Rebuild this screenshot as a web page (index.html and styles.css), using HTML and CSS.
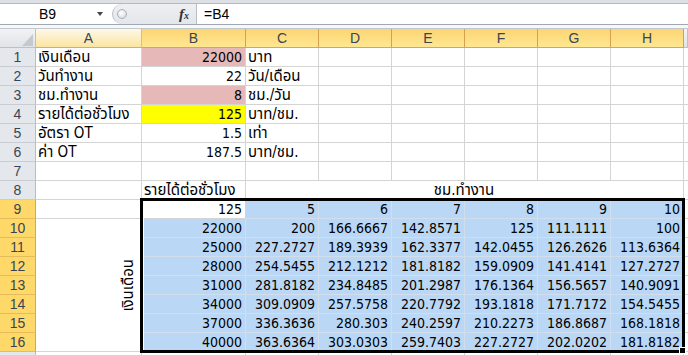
FILE: index.html
```html
<!DOCTYPE html>
<html lang="th">
<head>
    <meta charset="UTF-8">
    <title>รายได้ต่อชั่วโมง</title>
    <link rel="stylesheet" href="styles.css">
</head>
<body>
    <div class="ribbon-edge"></div>

    <!-- แถบสูตร -->
    <div class="formula-bar">
        <div class="name-box">
            <span class="name">B9</span>
            <span class="drop"></span>
        </div>
        <div class="fx-box">
            <span class="knob"></span>
            <span class="fx"><i>f</i><small>x</small></span>
        </div>
        <div class="formula">=B4</div>
    </div>
    <div class="gap"></div>

    <!-- ตาราง -->
    <div class="sheet">
        <div class="h corner"><span class="tri"></span></div>
        <div class="h col-a">A</div>
        <div class="h sel">B</div>
        <div class="h sel">C</div>
        <div class="h sel">D</div>
        <div class="h sel">E</div>
        <div class="h sel">F</div>
        <div class="h sel">G</div>
        <div class="h sel">H</div>
        <div class="h"></div>

        <div class="h rh">1</div>
        <div class="c t">เงินเดือน</div>
        <div class="c n pink">22000</div>
        <div class="c t">บาท</div>
        <div class="c"></div><div class="c"></div><div class="c"></div><div class="c"></div><div class="c"></div><div class="c"></div>

        <div class="h rh">2</div>
        <div class="c t">วันทำงาน</div>
        <div class="c n">22</div>
        <div class="c t">วัน/เดือน</div>
        <div class="c"></div><div class="c"></div><div class="c"></div><div class="c"></div><div class="c"></div><div class="c"></div>

        <div class="h rh">3</div>
        <div class="c t">ชม.ทำงาน</div>
        <div class="c n pink">8</div>
        <div class="c t">ชม./วัน</div>
        <div class="c"></div><div class="c"></div><div class="c"></div><div class="c"></div><div class="c"></div><div class="c"></div>

        <div class="h rh">4</div>
        <div class="c t">รายได้ต่อชั่วโมง</div>
        <div class="c n yellow">125</div>
        <div class="c t">บาท/ชม.</div>
        <div class="c"></div><div class="c"></div><div class="c"></div><div class="c"></div><div class="c"></div><div class="c"></div>

        <div class="h rh">5</div>
        <div class="c t">อัตรา OT</div>
        <div class="c n">1.5</div>
        <div class="c t">เท่า</div>
        <div class="c"></div><div class="c"></div><div class="c"></div><div class="c"></div><div class="c"></div><div class="c"></div>

        <div class="h rh">6</div>
        <div class="c t">ค่า OT</div>
        <div class="c n">187.5</div>
        <div class="c t">บาท/ชม.</div>
        <div class="c"></div><div class="c"></div><div class="c"></div><div class="c"></div><div class="c"></div><div class="c"></div>

        <div class="h rh">7</div>
        <div class="c"></div><div class="c"></div><div class="c"></div><div class="c"></div><div class="c"></div><div class="c"></div><div class="c"></div><div class="c"></div><div class="c"></div>

        <div class="h rh">8</div>
        <div class="c"></div>
        <div class="c t">รายได้ต่อชั่วโมง</div>
        <div class="c t merge-hours">ชม.ทำงาน</div>
        <div class="c"></div>

        <div class="h rh sel">9</div>
        <div class="c"></div>
        <div class="c n">125</div>
        <div class="c n b">5</div>
        <div class="c n b">6</div>
        <div class="c n b">7</div>
        <div class="c n b">8</div>
        <div class="c n b">9</div>
        <div class="c n b">10</div>
        <div class="c"></div>

        <div class="h rh sel">10</div>
        <div class="c t merge-salary"><span class="vertical">เงินเดือน</span></div>
        <div class="c n b">22000</div>
        <div class="c n b">200</div>
        <div class="c n b">166.6667</div>
        <div class="c n b">142.8571</div>
        <div class="c n b">125</div>
        <div class="c n b">111.1111</div>
        <div class="c n b">100</div>
        <div class="c"></div>

        <div class="h rh sel">11</div>
        <div class="c n b">25000</div>
        <div class="c n b">227.2727</div>
        <div class="c n b">189.3939</div>
        <div class="c n b">162.3377</div>
        <div class="c n b">142.0455</div>
        <div class="c n b">126.2626</div>
        <div class="c n b">113.6364</div>
        <div class="c"></div>

        <div class="h rh sel">12</div>
        <div class="c n b">28000</div>
        <div class="c n b">254.5455</div>
        <div class="c n b">212.1212</div>
        <div class="c n b">181.8182</div>
        <div class="c n b">159.0909</div>
        <div class="c n b">141.4141</div>
        <div class="c n b">127.2727</div>
        <div class="c"></div>

        <div class="h rh sel">13</div>
        <div class="c n b">31000</div>
        <div class="c n b">281.8182</div>
        <div class="c n b">234.8485</div>
        <div class="c n b">201.2987</div>
        <div class="c n b">176.1364</div>
        <div class="c n b">156.5657</div>
        <div class="c n b">140.9091</div>
        <div class="c"></div>

        <div class="h rh sel">14</div>
        <div class="c n b">34000</div>
        <div class="c n b">309.0909</div>
        <div class="c n b">257.5758</div>
        <div class="c n b">220.7792</div>
        <div class="c n b">193.1818</div>
        <div class="c n b">171.7172</div>
        <div class="c n b">154.5455</div>
        <div class="c"></div>

        <div class="h rh sel">15</div>
        <div class="c n b">37000</div>
        <div class="c n b">336.3636</div>
        <div class="c n b">280.303</div>
        <div class="c n b">240.2597</div>
        <div class="c n b">210.2273</div>
        <div class="c n b">186.8687</div>
        <div class="c n b">168.1818</div>
        <div class="c"></div>

        <div class="h rh sel">16</div>
        <div class="c n b">40000</div>
        <div class="c n b">363.6364</div>
        <div class="c n b">303.0303</div>
        <div class="c n b">259.7403</div>
        <div class="c n b">227.2727</div>
        <div class="c n b">202.0202</div>
        <div class="c n b">181.8182</div>
        <div class="c"></div>

        <div class="h rh"></div>
        <div class="c"></div><div class="c"></div><div class="c"></div><div class="c"></div><div class="c"></div><div class="c"></div><div class="c"></div><div class="c"></div><div class="c"></div>

        <!-- กรอบช่วงที่เลือก B9:H16 -->
        <div class="selection"><span class="handle"></span></div>
    </div>
</body>
</html>
```

FILE: styles.css
```css
body {
    margin: 0;
    background: #fff;
    overflow: hidden;
    font-family: "DejaVu Sans Condensed", "Liberation Sans", "Noto Sans Thai", sans-serif;
    color: #000;
}

.ribbon-edge {
    height: 3px;
    background: #dde1e6;
    border-bottom: 1px solid #b3b9c1;
}

/* แถบสูตร */
.formula-bar {
    display: flex;
    height: 20px;
    border-bottom: 1px solid #a0a8b1;
    font-family: "Liberation Sans", sans-serif;
    font-size: 14px;
}
.name-box {
    width: 112px;
    display: flex;
    align-items: center;
}
.name {
    width: 95px;
    text-align: center;
}
.drop {
    width: 0;
    height: 0;
    border-left: 3px solid transparent;
    border-right: 3px solid transparent;
    border-top: 4px solid #444;
    margin-left: 2px;
}
.fx-box {
    width: 83px;
    display: flex;
    align-items: center;
    background: linear-gradient(#eef0f2, #e3e6ea);
    border-left: 1px solid #b7bdc5;
    border-right: 1px solid #b7bdc5;
    border-radius: 11px 0 0 11px;
}
.knob {
    width: 8px;
    height: 8px;
    margin-left: 4px;
    border: 1px solid #a9b0b8;
    border-radius: 50%;
    background: radial-gradient(circle at 40% 40%, #ffffff, #cdd2d8);
}
.fx {
    margin-left: auto;
    margin-right: 7px;
    font-family: "Liberation Serif", serif;
    font-weight: bold;
    font-size: 15px;
    color: #333;
}
.fx small {
    font-size: 10px;
    font-style: italic;
}
.formula {
    flex: 1;
    padding-left: 7px;
    line-height: 20px;
}
.gap {
    height: 3px;
    background: #f7f8f9;
    border-bottom: 1px solid #c3c8ce;
}

/* ตาราง */
.sheet {
    position: relative;
    display: grid;
    grid-template-columns: 36px 106px 104px repeat(6, 73px) 4px;
    grid-auto-rows: 19px;
}
.c {
    box-sizing: border-box;
    border-right: 1px solid #d4d4d4;
    border-bottom: 1px solid #d4d4d4;
    padding: 0 3px 0 2px;
    font-size: 14px;
    line-height: 18px;
    white-space: nowrap;
    overflow: hidden;
}
.t {
    font-size: 15px;
}
.n {
    text-align: right;
}
.pink {
    background: #e6b8b7;
}
.yellow {
    background: #ffff00;
}
.b {
    background: #bad7f6;
    border-color: #d2deeb;
}

.h {
    box-sizing: border-box;
    background: linear-gradient(#f1f3f5, #e1e4e8);
    border-right: 1px solid #bcc1c8;
    border-bottom: 1px solid #bcc1c8;
    font-family: "Liberation Sans", sans-serif;
    font-size: 14px;
    line-height: 18px;
    text-align: center;
    color: #3a4553;
}
.h.col-a {
    background: linear-gradient(#fdf8e9, #fbe5a0);
    border-bottom-color: #e3ac4e;
}
.h.sel {
    background: linear-gradient(#fbd574, #ffe790);
    border-right-color: #d4a24e;
    border-bottom-color: #e3a43e;
}
.h.rh {
    background: #e4e7eb;
    border-bottom-color: #c9cdd3;
    border-right-color: #b8bdc4;
}
.h.rh.sel {
    background: #ffd86a;
    border-bottom-color: #e6bb5c;
    border-right-color: #e3a43e;
}
.corner {
    display: flex;
    align-items: flex-end;
    justify-content: flex-end;
    padding: 0 2px 1px 0;
}
.tri {
    width: 0;
    height: 0;
    border-left: 11px solid transparent;
    border-bottom: 12px solid #c4c9cf;
}

.merge-hours {
    grid-column: 4 / 10;
    text-align: center;
}
.merge-salary {
    grid-column: 2;
    grid-row: 11 / 18;
    display: flex;
    justify-content: flex-end;
    align-items: center;
    padding-right: 4px;
}
.vertical {
    writing-mode: vertical-rl;
    transform: rotate(180deg);
    line-height: 18px;
}

/* กรอบเลือก วางทับบนเซลล์ */
.selection {
    position: absolute;
    left: 140px;
    top: 169px;
    width: 545px;
    height: 155px;
    box-sizing: border-box;
    border: 3px solid #000;
    box-shadow: inset 1px 0 0 #fff;
    pointer-events: none;
}
.handle {
    position: absolute;
    right: -4px;
    bottom: -4px;
    width: 5px;
    height: 5px;
    background: #000;
    border: 1px solid #fff;
}
```
